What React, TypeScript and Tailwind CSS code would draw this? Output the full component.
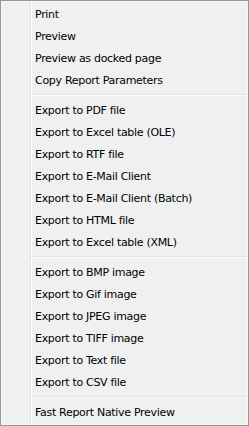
import React from "react";

const groups: string[][] = [
  ["Print", "Preview", "Preview as docked page", "Copy Report Parameters"],
  [
    "Export to PDF file",
    "Export to Excel table (OLE)",
    "Export to RTF file",
    "Export to E-Mail Client",
    "Export to E-Mail Client (Batch)",
    "Export to HTML file",
    "Export to Excel table (XML)",
  ],
  [
    "Export to BMP image",
    "Export to Gif image",
    "Export to JPEG image",
    "Export to TIFF image",
    "Export to Text file",
    "Export to CSV file",
  ],
  ["Fast Report Native Preview"],
];

export default function App() {
  return (
    <div
      className="w-[249px] h-[426px] bg-[#f0f0f0] border border-[#979797] text-black"
      style={{ fontFamily: '"DejaVu Sans", sans-serif' }}
    >
      <div className="relative h-full border border-[#f5f5f5] py-[1px]">
        <div className="absolute left-[28px] top-0 bottom-0 w-[2px] border-l border-[#e2e3e3] bg-[#f0f0f0] border-r border-r-white" />
        <div className="relative flex flex-col">
          {groups.map((g, gi) => (
            <React.Fragment key={gi}>
              {gi > 0 && (
                <div className="h-[8px] flex flex-col justify-center pl-[29px] pr-[1px]">
                  <div className="h-[1px] bg-[#e0e0e0]" />
                  <div className="h-[1px] bg-white" />
                </div>
              )}
              {g.map((t) => (
                <div
                  key={t}
                  className="h-[22px] flex items-center pl-[33px] text-[11px] leading-none tracking-[-0.3px]"
                >
                  {t}
                </div>
              ))}
            </React.Fragment>
          ))}
        </div>
      </div>
    </div>
  );
}
